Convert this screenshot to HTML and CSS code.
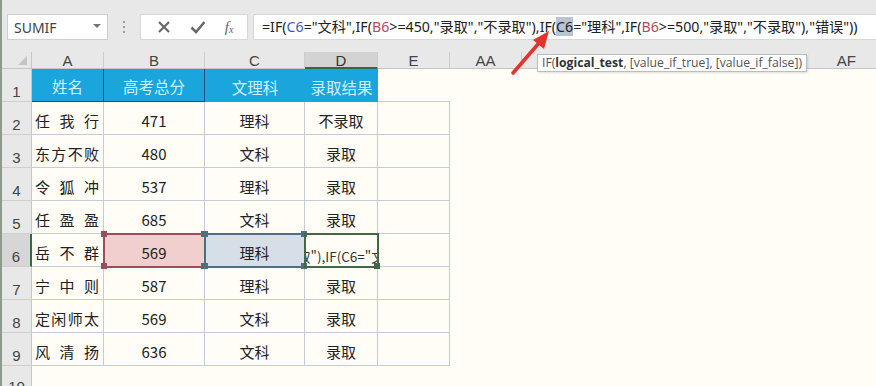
FILE: index.html
```html
<!DOCTYPE html>
<html lang="zh">
<head>
<meta charset="utf-8">
<link rel="stylesheet" href="styles.css">
</head>
<body>
<div class="app">
  <div class="toolbar">
    <div class="namebox"><span>SUMIF</span><span class="caret"></span></div>
    <div class="grip"><i></i><i></i><i></i></div>
    <div class="btns">
      <svg class="ic" width="14" height="14" viewBox="0 0 14 14"><path d="M2 2L12 12M12 2L2 12" stroke="#6a6a6a" stroke-width="2.2"/></svg>
      <svg class="ic" width="16" height="14" viewBox="0 0 16 14"><path d="M1.5 7.5L6 12L14.5 2" stroke="#6a6a6a" stroke-width="2.6" fill="none"/></svg>
      <span class="fx"><i>f</i><sub>x</sub></span>
    </div>
    <div class="formula">=IF(<span class="ref-c">C6</span>="文科",IF(<span class="ref-b">B6</span>&gt;=450,"录取","不录取"),IF(<span class="sel">C6</span>="理科",IF(<span class="ref-b">B6</span>&gt;=500,"录取","不录取"),"错误"))</div>
  </div>

  <div class="sheet">
    <div class="corner"><span class="tri"></span></div>
    <div class="ch">A</div>
    <div class="ch">B</div>
    <div class="ch">C</div>
    <div class="ch active">D</div>
    <div class="ch">E</div>
    <div class="ch sep">AA</div>
    <div class="ch rest"><span>AF</span></div>

    <div class="rh">1</div>
    <div class="hd dk">姓名</div>
    <div class="hd dk">高考总分</div>
    <div class="hd">文理科</div>
    <div class="hd">录取结果</div>
    <div class="c e1"></div>
    <div class="blank"></div>
    <div class="blank"></div>

    <div class="rh">2</div><div class="c nm"><span>任我行</span></div><div class="c">471</div><div class="c">理科</div><div class="c">不录取</div><div class="c"></div><div class="blank"></div><div class="blank"></div>
    <div class="rh">3</div><div class="c nm"><span>东方不败</span></div><div class="c">480</div><div class="c">文科</div><div class="c">录取</div><div class="c"></div><div class="blank"></div><div class="blank"></div>
    <div class="rh">4</div><div class="c nm"><span>令狐冲</span></div><div class="c">537</div><div class="c">理科</div><div class="c">录取</div><div class="c"></div><div class="blank"></div><div class="blank"></div>
    <div class="rh">5</div><div class="c nm"><span>任盈盈</span></div><div class="c">685</div><div class="c">文科</div><div class="c">录取</div><div class="c"></div><div class="blank"></div><div class="blank"></div>
    <div class="rh arow">6</div><div class="c nm"><span>岳不群</span></div>
    <div class="c refb">569<i class="h tl"></i><i class="h tr"></i><i class="h bl"></i><i class="h br"></i></div>
    <div class="c refc">理科<i class="h tl"></i><i class="h tr"></i><i class="h bl"></i><i class="h br"></i></div>
    <div class="c act"><span class="edit">取"),IF(C6="文</span><i class="h br g"></i></div>
    <div class="c"></div><div class="blank"></div><div class="blank"></div>
    <div class="rh">7</div><div class="c nm"><span>宁中则</span></div><div class="c">587</div><div class="c">理科</div><div class="c">录取</div><div class="c"></div><div class="blank"></div><div class="blank"></div>
    <div class="rh">8</div><div class="c nm"><span>定闲师太</span></div><div class="c">569</div><div class="c">文科</div><div class="c">录取</div><div class="c"></div><div class="blank"></div><div class="blank"></div>
    <div class="rh">9</div><div class="c nm"><span>风清扬</span></div><div class="c">636</div><div class="c">文科</div><div class="c">录取</div><div class="c"></div><div class="blank"></div><div class="blank"></div>
    <div class="rh last">10</div>
  </div>

  <div class="tip">IF(<b>logical_test</b>, [value_if_true], [value_if_false])</div>
  <svg class="arrow" width="50" height="50" viewBox="0 0 50 50">
    <path d="M3 45 L29 15" stroke="#e2332f" stroke-width="3.6" stroke-linecap="round"/>
    <polygon points="39,3 23,12 34,21" fill="#e2332f"/>
  </svg>
</div>
</body>
</html>
```

FILE: styles.css
```css
* { box-sizing: border-box; }
html, body { margin: 0; padding: 0; }
body {
  width: 876px; height: 386px; overflow: hidden;
  background: #fffdf5;
  font-family: "Liberation Sans", "Noto Sans CJK SC", sans-serif;
  color: #333;
}
.app { position: relative; width: 876px; height: 386px; overflow: hidden; }

.toolbar {
  height: 52px;
  background: #e8e8e8;
  display: flex;
  align-items: flex-start;
  padding-top: 14px;
  padding-left: 7px;
  border-left: 2px solid #8f9a8f;
}
.namebox {
  width: 101px; height: 26px;
  background: #fff;
  border: 1px solid #cfcfcf;
  display: flex; align-items: center; justify-content: space-between;
  padding: 0 6px 0 6px;
  font-family: "Noto Sans", "Liberation Sans", sans-serif;
  font-size: 14px; color: #444;
  margin-left: -2px;
}
.caret {
  width: 0; height: 0;
  border-left: 4px solid transparent; border-right: 4px solid transparent;
  border-top: 4px solid #777;
  margin-top: -2px;
}
.grip {
  width: 32px; height: 26px;
  display: flex; flex-direction: column; align-items: center; justify-content: center; gap: 3px;
}
.grip i { width: 2px; height: 2px; background: #a0a0a0; display: block; }
.btns {
  width: 108px; height: 26px;
  background: #fff;
  border: 1px solid #d8d8d8;
  display: flex; align-items: center; justify-content: space-around;
  padding: 0 4px 0 6px;
}
.fx { font-family: "Liberation Serif", serif; font-size: 15px; color: #666; }
.fx sub { font-size: 10px; font-style: italic; vertical-align: -1px; }
.formula {
  flex: 1;
  margin-left: 5px;
  height: 26px;
  background: #fff;
  border: 1px solid #d8d8d8;
  border-right: none;
  font-family: "Noto Sans", "Noto Sans CJK SC", sans-serif;
  font-size: 14.2px;
  line-height: 24px;
  padding-left: 8px;
  white-space: nowrap;
  color: #222;
  overflow: hidden;
}
.ref-c { color: #3a5ea8; }
.ref-b { color: #b8475a; }
.sel { background: #b9c3d3; }

.sheet {
  display: grid;
  grid-template-columns: 30px 72px 101px 100px 73px 72px 72px 1fr;
  grid-template-rows: 17px repeat(9, 33px) 1fr;
  height: 334px;
  border-left: 2px solid #8f9a8f;
}
.corner {
  background: #e8e8e8;
  border-right: 1px solid #c6c6c6;
  border-bottom: 1px solid #c6c6c6;
  position: relative;
}
.tri {
  position: absolute; right: 4px; bottom: 3px;
  width: 0; height: 0;
  border-left: 9px solid transparent;
  border-bottom: 9px solid #c4c4c4;
}
.ch {
  background: #e8e8e8;
  border-right: 1px solid #cdcdcd;
  border-bottom: 1px solid #c6c6c6;
  font-size: 15px; color: #444;
  display: flex; align-items: center; justify-content: center;
  line-height: 1;
  padding-top: 1px;
}
.ch.active { background: #d3d3d3; border-bottom: 2px solid #2f6b3e; color: #333; }
.ch.sep { border-left: 1px solid #cdcdcd; margin-left: -1px; }
.ch.rest { border-right: none; justify-content: flex-end; padding-right: 20px; }
.rh {
  grid-column: 1;
  background: #e8e8e8;
  border-right: 1px solid #c6c6c6;
  border-bottom: 1px solid #cfcfcf;
  font-size: 15px; color: #444;
  display: flex; align-items: flex-end; justify-content: center;
  padding-bottom: 1px;
}
.rh.arow { background: #d6d6d6; border-right: 2px solid #2f6b3e; }
.rh.last { align-items: flex-start; padding-top: 12px; border-bottom: none; }

.hd {
  background: #1aa5dd;
  color: #cdf3ff;
  font-family: "Noto Sans CJK SC", sans-serif;
  font-size: 15.5px;
  display: flex; align-items: center; justify-content: center;
  padding-top: 2px;
}
.hd.dk { border-right: 1px solid #0c4f7a; border-bottom: 1px solid #0c4f7a; }

.c {
  border-right: 1px solid #c5ccd9;
  border-bottom: 1px solid #c5ccd9;
  font-family: "Noto Sans CJK SC", sans-serif;
  font-size: 15px; color: #222;
  display: flex; align-items: center; justify-content: center;
  padding-top: 4px;
  position: relative;
}
.c.e1 { border-right: none; }
.nm { justify-content: stretch; padding-left: 3px; padding-right: 4px; }
.nm span { display: block; width: 100%; text-align: justify; text-align-last: justify; }

.refb { background: #f2cfcf; outline: 2px solid #9c4c5c; outline-offset: -1px; z-index: 2; }
.refc { background: #d6dfe8; outline: 2px solid #4f6e82; outline-offset: -1px; z-index: 2; }
.act { outline: 2px solid #3f6a45; outline-offset: -1px; z-index: 3; overflow: visible; align-items: flex-end; justify-content: flex-start; padding-bottom: 2px; }
.edit {
  display: block; width: 72px; overflow: hidden; white-space: nowrap;
  font-size: 13.5px; color: #333; text-indent: -8px; line-height: 16px;
}
.h { position: absolute; width: 6px; height: 6px; display: block; }
.refb .h { background: #9c4c5c; }
.refc .h { background: #4f6e82; }
.h.g { background: #3f6a45; }
.h.tl { left: -3px; top: -3px; }
.h.tr { right: -3px; top: -3px; }
.h.bl { left: -3px; bottom: -3px; }
.h.br { right: -3px; bottom: -3px; }

.tip {
  position: absolute; left: 537px; top: 54px;
  height: 18px;
  background: #fff;
  border: 1px solid #bdbdbd;
  font-family: "Open Sans", "Noto Sans", sans-serif;
  font-size: 12.2px; line-height: 16px;
  color: #555;
  padding: 0 4px;
  white-space: nowrap;
  box-shadow: 1px 1px 2px rgba(0,0,0,.12);
}
.tip b { color: #333; }
.arrow { position: absolute; left: 510px; top: 28px; }
```
